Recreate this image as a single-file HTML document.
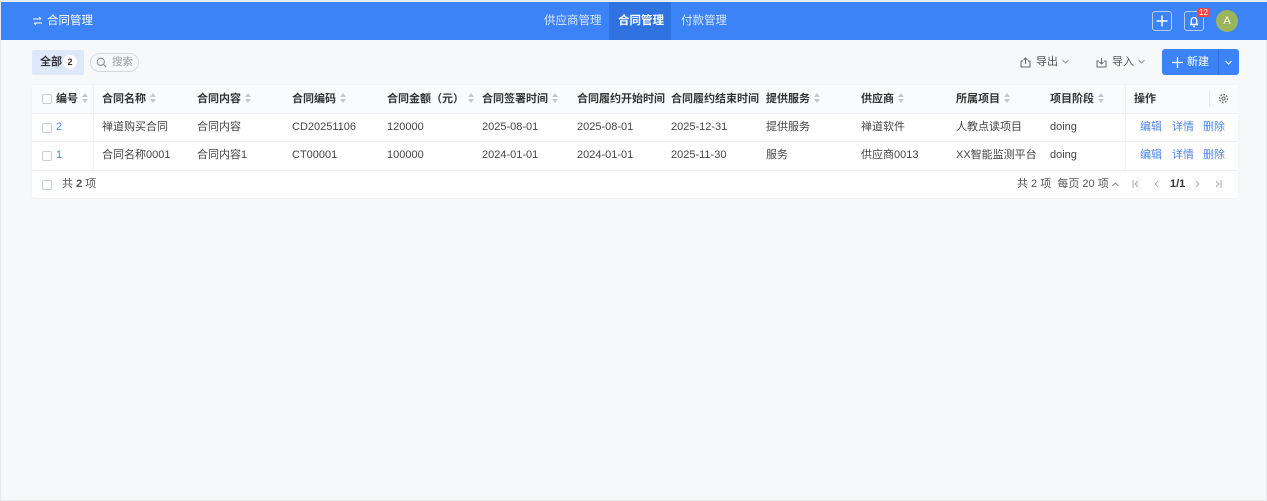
<!DOCTYPE html>
<html><head><meta charset="utf-8"><style>
*{margin:0;padding:0;box-sizing:border-box}
body{width:1267px;height:501px;background:#f7f8fa;font-family:"Liberation Sans","Noto Sans CJK SC",sans-serif;font-size:11px;color:#444;position:relative;overflow:hidden;border:1px solid #e6e8ec}
.a{position:absolute;white-space:nowrap;line-height:14px}
.top{left:0;top:1px;width:1267px;height:38px;background:#3b83f7}
.w{color:#fff}
.card{left:31px;top:84px;width:1206px;height:113px;background:#fff;border-radius:3px;box-shadow:0 0 2px rgba(0,0,0,.06)}
.hrow{left:31px;top:84px;width:1206px;height:28px;background:#fafbfd}
.line{height:1px;background:#eef0f3}
.th{font-weight:bold;color:#333;top:91px}
.s{display:inline-block;width:7px;height:10px;margin-left:4px;vertical-align:-1px;position:relative}
.s:before{content:"";position:absolute;left:0;top:0;border-left:3.5px solid transparent;border-right:3.5px solid transparent;border-bottom:4px solid #c4c8ce}
.s:after{content:"";position:absolute;left:0;top:6px;border-left:3.5px solid transparent;border-right:3.5px solid transparent;border-top:4px solid #c4c8ce}
.cb{width:10px;height:10px;border:1px solid #c8ccd3;border-radius:2px;background:#fff}
.lk{color:#4d86f0}
</style></head><body>
<div class="a top"></div>
<svg class="a" style="left:31px;top:15px" width="11" height="10" viewBox="0 0 11 10"><path d="M1 3h8M7 1l2 2M10 7H2M4 9L2 7" stroke="#fff" stroke-width="1.1" fill="none"/></svg>
<div class="a w" style="left:46px;top:13px;font-size:11.5px">合同管理</div>
<div class="a" style="left:608px;top:1px;width:62px;height:38px;background:#3073e0"></div>
<div class="a" style="left:543px;top:13px;color:#dce8fd;font-size:11.5px">供应商管理</div>
<div class="a w" style="left:617px;top:13px;font-size:11.5px;font-weight:bold">合同管理</div>
<div class="a" style="left:680px;top:13px;color:#dce8fd;font-size:11.5px">付款管理</div>
<div class="a" style="left:1151px;top:10px;width:20px;height:20px;border:1px solid rgba(255,255,255,.6);border-radius:3px"><svg width="18" height="18" viewBox="0 0 18 18" style="position:absolute;left:0;top:0"><path d="M9 3.5v11M3.5 9h11" stroke="#fff" stroke-width="1.5"/></svg></div>
<div class="a" style="left:1183px;top:10px;width:20px;height:20px;border:1px solid rgba(255,255,255,.6);border-radius:3px"><svg width="18" height="18" viewBox="0 0 18 18" style="position:absolute;left:0;top:0"><path d="M5 12.5h8M6.3 12V8.3a2.7 2.7 0 0 1 5.4 0V12M8 14.5h2" stroke="#fff" stroke-width="1.4" fill="none"/></svg></div>
<div class="a" style="left:1196px;top:7px;background:#f04848;color:#fff;font-size:8px;line-height:9px;padding:0 2px;border-radius:2px">12</div>
<div class="a" style="left:1215px;top:9px;width:22px;height:22px;border-radius:50%;background:#9bb55a;color:#fff;text-align:center;line-height:22px;font-size:11px">A</div>

<div class="a" style="left:31px;top:49px;width:52px;height:25px;background:#dde9fb;border-radius:2px"></div>
<div class="a" style="left:39px;top:54px;font-weight:bold;color:#333">全部</div>
<div class="a" style="left:62px;top:54px;width:14px;height:14px;border-radius:50%;background:#fff;text-align:center;line-height:14px;font-size:9px;font-weight:bold;color:#333">2</div>
<div class="a" style="left:89px;top:52px;width:49px;height:19px;border:1px solid #d6d9de;border-radius:10px;color:#999;font-size:10.5px;line-height:17px;padding-left:21px">搜索</div>
<svg class="a" style="left:95px;top:56px" width="11" height="11" viewBox="0 0 11 11"><circle cx="4.8" cy="4.8" r="3.6" stroke="#888" fill="none"/><path d="M7.5 7.5L10 10" stroke="#888"/></svg>

<svg class="a" style="left:1019px;top:56px" width="11" height="11" viewBox="0 0 11 11"><path d="M3 4H1v6h9V4H8M5.5 7V1M3.5 3l2-2 2 2" stroke="#666" fill="none"/></svg>
<div class="a" style="left:1035px;top:54px;color:#555">导出</div>
<svg class="a" style="left:1061px;top:58px" width="7" height="5" viewBox="0 0 7 5"><path d="M.5 1l3 3 3-3" stroke="#999" fill="none"/></svg>
<svg class="a" style="left:1095px;top:56px" width="11" height="11" viewBox="0 0 11 11"><path d="M3 4H1v6h9V4H8M5.5 1v6M3.5 5l2 2 2-2" stroke="#666" fill="none"/></svg>
<div class="a" style="left:1111px;top:54px;color:#555">导入</div>
<svg class="a" style="left:1137px;top:58px" width="7" height="5" viewBox="0 0 7 5"><path d="M.5 1l3 3 3-3" stroke="#999" fill="none"/></svg>
<div class="a" style="left:1161px;top:48px;width:77px;height:26px;background:#3b83f7;border-radius:3px"></div>
<div class="a" style="left:1217px;top:48px;width:1px;height:26px;background:#2f6fd8"></div>
<svg class="a" style="left:1171px;top:56px" width="11" height="11" viewBox="0 0 11 11"><path d="M5.5 0v11M0 5.5h11" stroke="#fff" stroke-width="1.3"/></svg>
<div class="a w" style="left:1186px;top:54px">新建</div>
<svg class="a" style="left:1224px;top:59px" width="7" height="5" viewBox="0 0 7 5"><path d="M.5 1l3 3 3-3" stroke="#fff" fill="none"/></svg>

<div class="a card"></div>
<div class="a hrow"></div>
<div class="a line" style="left:31px;top:112px;width:1206px"></div>
<div class="a line" style="left:31px;top:140px;width:1206px"></div>
<div class="a line" style="left:31px;top:169px;width:1206px"></div>
<div class="a" style="left:92px;top:84px;width:1px;height:85px;background:#eef0f3"></div>
<div class="a" style="left:1124px;top:84px;width:1px;height:85px;background:#eef0f3"></div>
<div class="a" style="left:1208px;top:90px;width:1px;height:16px;background:#e6e8ec"></div>

<div class="a cb" style="left:41px;top:93px"></div>
<div class="a th" style="left:55px">编号<span class="s"></span></div>
<div class="a th" style="left:101px">合同名称<span class="s"></span></div>
<div class="a th" style="left:196px">合同内容<span class="s"></span></div>
<div class="a th" style="left:291px">合同编码<span class="s"></span></div>
<div class="a th" style="left:386px">合同金额（元）<span class="s"></span></div>
<div class="a th" style="left:481px">合同签署时间<span class="s"></span></div>
<div class="a th" style="left:576px">合同履约开始时间</div>
<div class="a th" style="left:670px">合同履约结束时间</div>
<div class="a th" style="left:765px">提供服务<span class="s"></span></div>
<div class="a th" style="left:860px">供应商<span class="s"></span></div>
<div class="a th" style="left:955px">所属项目<span class="s"></span></div>
<div class="a th" style="left:1049px">项目阶段<span class="s"></span></div>
<div class="a th" style="left:1133px">操作</div>
<svg class="a" style="left:1217px;top:92px" width="11" height="11" viewBox="0 0 11 11"><circle cx="5.5" cy="5.5" r="1.6" stroke="#666" fill="none"/><circle cx="5.5" cy="5.5" r="4" stroke="#666" stroke-width="1.4" stroke-dasharray="1.6 1.5" fill="none"/></svg>

<div class="a cb" style="left:41px;top:122px"></div>
<div class="a lk" style="left:55px;top:119px">2</div>
<div class="a" style="left:101px;top:119px">禅道购买合同</div>
<div class="a" style="left:196px;top:119px">合同内容</div>
<div class="a" style="left:291px;top:119px">CD20251106</div>
<div class="a" style="left:386px;top:119px">120000</div>
<div class="a" style="left:481px;top:119px">2025-08-01</div>
<div class="a" style="left:576px;top:119px">2025-08-01</div>
<div class="a" style="left:670px;top:119px">2025-12-31</div>
<div class="a" style="left:765px;top:119px">提供服务</div>
<div class="a" style="left:860px;top:119px">禅道软件</div>
<div class="a" style="left:955px;top:119px">人教点读项目</div>
<div class="a" style="left:1049px;top:119px">doing</div>
<div class="a lk" style="left:1139px;top:119px">编辑</div>
<div class="a lk" style="left:1171px;top:119px">详情</div>
<div class="a lk" style="left:1202px;top:119px">删除</div>

<div class="a cb" style="left:41px;top:150px"></div>
<div class="a lk" style="left:55px;top:147px">1</div>
<div class="a" style="left:101px;top:147px">合同名称0001</div>
<div class="a" style="left:196px;top:147px">合同内容1</div>
<div class="a" style="left:291px;top:147px">CT00001</div>
<div class="a" style="left:386px;top:147px">100000</div>
<div class="a" style="left:481px;top:147px">2024-01-01</div>
<div class="a" style="left:576px;top:147px">2024-01-01</div>
<div class="a" style="left:670px;top:147px">2025-11-30</div>
<div class="a" style="left:765px;top:147px">服务</div>
<div class="a" style="left:860px;top:147px">供应商0013</div>
<div class="a" style="left:955px;top:147px">XX智能监测平台</div>
<div class="a" style="left:1049px;top:147px">doing</div>
<div class="a lk" style="left:1139px;top:147px">编辑</div>
<div class="a lk" style="left:1171px;top:147px">详情</div>
<div class="a lk" style="left:1202px;top:147px">删除</div>

<div class="a cb" style="left:41px;top:179px"></div>
<div class="a" style="left:61px;top:176px;color:#555">共 <b>2</b> 项</div>
<div class="a" style="left:1016px;top:176px;color:#555">共 2 项 &nbsp;每页 20 项</div>
<svg class="a" style="left:1111px;top:181px" width="7" height="5" viewBox="0 0 7 5"><path d="M.5 4l3-3 3 3" stroke="#888" fill="none"/></svg>
<svg class="a" style="left:1131px;top:179px" width="7" height="8" viewBox="0 0 7 8"><path d="M1 0v8M6 1L3 4l3 3" stroke="#aaa" fill="none"/></svg>
<svg class="a" style="left:1153px;top:179px" width="5" height="8" viewBox="0 0 5 8"><path d="M4 1L1 4l3 3" stroke="#aaa" fill="none"/></svg>
<div class="a" style="left:1169px;top:176px;color:#333;font-weight:bold">1/1</div>
<svg class="a" style="left:1194px;top:179px" width="5" height="8" viewBox="0 0 5 8"><path d="M1 1l3 3-3 3" stroke="#aaa" fill="none"/></svg>
<svg class="a" style="left:1214px;top:179px" width="7" height="8" viewBox="0 0 7 8"><path d="M6 0v8M1 1l3 3-3 3" stroke="#aaa" fill="none"/></svg>
</body></html>
